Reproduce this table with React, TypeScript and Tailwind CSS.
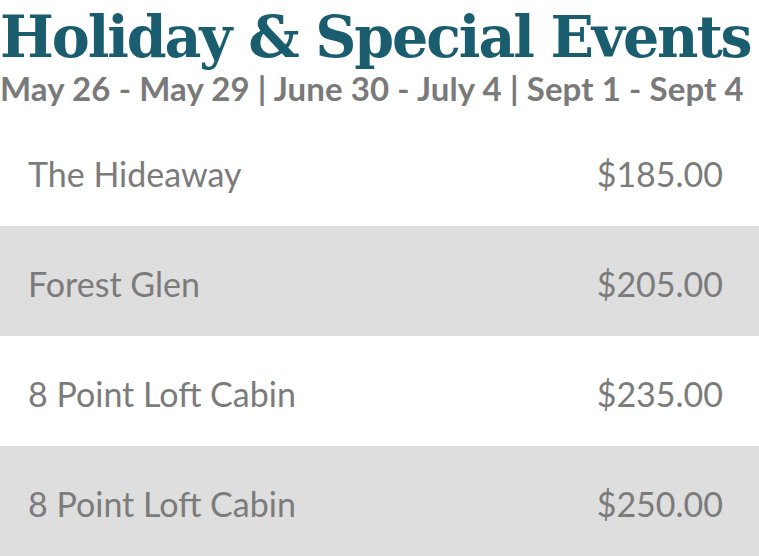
const rates = [
  { name: 'The Hideaway', price: '$185.00' },
  { name: 'Forest Glen', price: '$205.00' },
  { name: '8 Point Loft Cabin', price: '$235.00' },
  { name: '8 Point Loft Cabin', price: '$250.00' },
]

export default function App() {
  return (
    <div className="h-[556px] w-[759px] overflow-hidden bg-white">
      <header className="h-[116px] pt-[5px]">
        <h1 className="whitespace-nowrap font-['DejaVu_Serif',serif] text-[57px] leading-[64px] font-bold tracking-[-2.1px] text-[#1a5d6f]">
          Holiday &amp; Special Events
        </h1>
        <p className="whitespace-nowrap font-['Lato',sans-serif] text-[33px] leading-[38px] font-bold tracking-[0.1px] text-[#7a7a7a]">
          May 26 - May 29 | June 30 - July 4 | Sept 1 - Sept 4
        </p>
      </header>

      <ul className="font-['Lato',sans-serif] text-[34px] text-[#7b7b7b]">
        {rates.map((rate, i) => (
          <li
            key={i}
            className={`flex h-[110px] items-center justify-between pt-[5px] pr-[36px] pl-[28px] ${
              i % 2 === 1 ? 'bg-[#dedede]' : 'bg-white'
            }`}
          >
            <span>{rate.name}</span>
            <span>{rate.price}</span>
          </li>
        ))}
      </ul>
    </div>
  )
}
